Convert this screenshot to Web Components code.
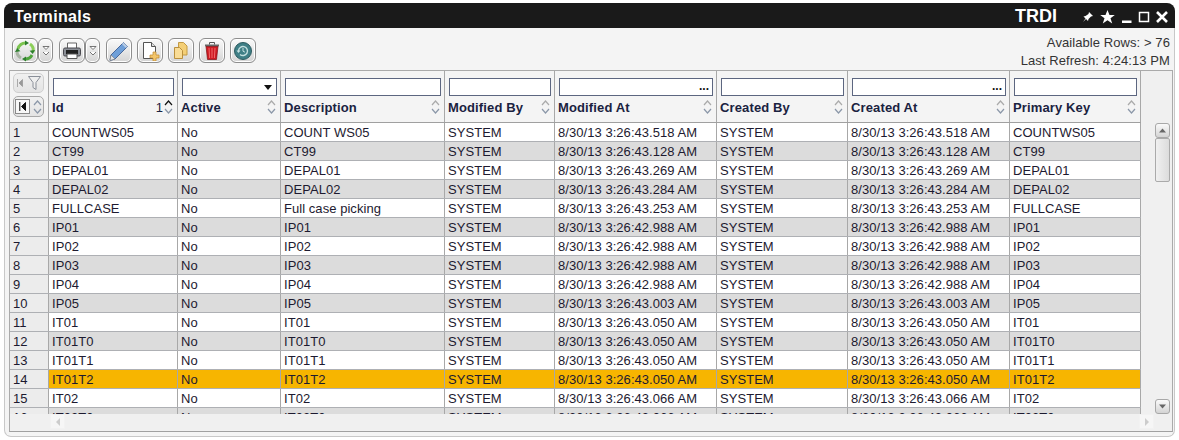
<!DOCTYPE html>
<html><head><meta charset="utf-8"><style>
html,body{margin:0;padding:0;background:#fff;height:440px;overflow:hidden}
body{font:13px "Liberation Sans",Arial,sans-serif;--cols:39px 129px 103px 164px 110px 162px 131px 162px 131px}
</style></head><body>
<x-window title="Terminals" brand="TRDI">
  <x-toolbar slot="toolbar"></x-toolbar>
  <x-grid></x-grid>
</x-window>
<script>
const ICONS={
refresh:`<svg width="22" height="22" viewBox="0 0 22 22"><g fill="none" stroke-width="3"><path d="M4 9a7.500 7.500 0 0 1 8-6" stroke="#7cc450"/><path d="M16 4a7.500 7.500 0 0 1 3 8" stroke="#8ccf58"/><path d="M18 15a7.500 7.500 0 0 1-7 4" stroke="#4fa53c"/><path d="M7 18a7.500 7.500 0 0 1-4-7" stroke="#a9b4a5"/></g><path d="M11 .5L15 3l-4 2.500zM21 10l-2.200 4-3.200-3.300zM12 21.500L8 19l4-2.500zM1 12l2.200-4 3.200 3.300z" fill="#2d7f2d"/></svg>`,
print:`<svg width="20" height="20" viewBox="0 0 20 20"><path d="M5.500 2h9v6h-9z" fill="#fff" stroke="#666"/><rect x="1.500" y="7" width="17" height="8" rx="1.500" fill="#8b8f96" stroke="#4a4a50"/><rect x="4" y="9" width="12" height="4" fill="#222"/><path d="M5 13h10v4.500H5z" fill="#fff" stroke="#555"/></svg>`,
edit:`<svg width="22" height="22" viewBox="0 0 22 22"><path d="M3 15L15.500 2.500l4 4L7 19l-5 1.500z" fill="#6f9fd8" stroke="#47679a"/><path d="M15.500 2.500l4 4-1.600 1.600-4-4z" fill="#b9cde6"/><path d="M3 15l4 4-5 1.500z" fill="#e6e6e6" stroke="#777" stroke-width=".6"/></svg>`,
add:`<svg width="20" height="20" viewBox="0 0 20 20"><path d="M3.500 1.500h8l4 4v12h-12z" fill="#fff" stroke="#555"/><path d="M11.500 1.500v4h4" fill="#ddd" stroke="#555"/><path d="M13 11h3v3h3v3h-3v3h-3v-3h-3v-3h3z" fill="#f2c56c" stroke="#c28a2e" stroke-width=".7"/></svg>`,
copy:`<svg width="20" height="20" viewBox="0 0 20 20"><path d="M7.500 1.500h5l3.500 3.500v9H7.500z" fill="#f4cf76" stroke="#c29a45"/><path d="M3.500 6.500h5l3 3v8h-8z" fill="#f9dc95" stroke="#b98f3d"/></svg>`,
del:`<svg width="18" height="20" viewBox="0 0 18 20"><path d="M2 3.500h14v2H2z" fill="#666"/><path d="M6.500 3.500V1.500h5v2" fill="none" stroke="#555"/><path d="M3 5.500h12l-1.500 13h-9z" fill="#cf1a22" stroke="#7d1014" stroke-width=".7"/><path d="M6 7l.6 10M9 7v10M12 7l-.6 10" stroke="#f06a6a"/></svg>`,
hist:`<svg width="20" height="20" viewBox="0 0 20 20"><circle cx="10" cy="10" r="8.500" fill="#3f7f86" stroke="#2d5b60"/><path d="M5.500 10a4.500 4.500 0 1 1 1.500 3.400" fill="none" stroke="#c5e0e0" stroke-width="1.400"/><path d="M3.500 9.500h4l-2 2.500z" fill="#c5e0e0"/><path d="M10 7v3.200l2 1" fill="none" stroke="#c5e0e0"/></svg>`
};

class XWindow extends HTMLElement{constructor(){super();const s=this.attachShadow({mode:'open'});
s.innerHTML=`<style>
:host{display:block;margin:3px 4px 0 4px;width:1171px;height:434px;box-sizing:border-box;background:#f4f4f4;border:1px solid #c8c8c8;border-top:0;border-radius:9px 9px 7px 7px;position:relative}
.bar{height:25px;box-sizing:border-box;padding:2px 7px 0 10px;margin:0 -1px;background:#1a1a1a;border-radius:8px 8px 0 0;color:#fff;display:flex;align-items:center;font-weight:bold;font-size:16px}
.t{flex:1;letter-spacing:.3px}.brand{margin-right:25px;font-size:18px}
.ic{display:flex;gap:6px;align-items:center}
.tb{padding:0 2px 0 4px}
</style>
<div class="bar"><span class="t">${this.getAttribute('title')}</span><span class="brand">${this.getAttribute('brand')}</span>
<span class="ic">
<svg width="12" height="14" viewBox="0 0 12 14"><path d="M7 2l4 4-2 .5-2.500 2.500-.5 2-2-2-3 3 2.500-3.500-2-2 2-.5L6.500 4z" fill="#fff"/></svg>
<svg width="15" height="14" viewBox="0 0 15 14"><path d="M7.500 0l2 5h5.300l-4.300 3.200 1.700 5.300-4.700-3.300-4.700 3.300 1.700-5.300L.2 5h5.300z" fill="#fff"/></svg>
<svg width="11" height="14" viewBox="0 0 11 14"><path d="M1 10.500h9.500v2.500H1z" fill="#fff"/></svg>
<svg width="12" height="14" viewBox="0 0 12 14"><path d="M1.500 2.500h9v9h-9z" fill="none" stroke="#fff" stroke-width="1.500"/></svg>
<svg width="12" height="14" viewBox="0 0 12 14"><path d="M1 2l10 10M11 2L1 12" stroke="#fff" stroke-width="2.600"/></svg>
</span></div>
<div class="tb"><slot name="toolbar"></slot></div>
<div class="g"><slot></slot></div>`;}}

class XBtn extends HTMLElement{constructor(){super();const s=this.attachShadow({mode:'open'});
const w=this.getAttribute('w')||26;const ic=this.getAttribute('icon');
s.innerHTML=`<style>:host{display:flex;align-items:center;justify-content:center;box-sizing:border-box;width:${w}px;height:25px;border:1px solid #8e8e8e;border-radius:6px;background:linear-gradient(#fafafa,#e6e6e6 55%,#d4d4d4);box-shadow:inset 0 0 0 1px #fff}</style>
${ic==='more'?`<svg width="8" height="12" viewBox="0 0 8 12"><path d="M1 1.500l3 3 3-3zM1 7l3 3 3-3" fill="#fff" stroke="#555" stroke-width=".8"/></svg>`:ICONS[ic]}`;}}

class XToolbar extends HTMLElement{constructor(){super();const s=this.attachShadow({mode:'open'});
s.innerHTML=`<style>:host{display:flex;height:42px;padding-top:10px;box-sizing:border-box;align-items:flex-start}
.l{display:flex;flex:1;margin-left:3px}.gap{width:5px}.g6{width:6px}
.r{text-align:right;letter-spacing:.08px;color:#333;line-height:18px;margin-top:-4px;padding-right:2px}
</style>
<div class="l"><x-btn icon="refresh"></x-btn><x-btn icon="more" w="15"></x-btn><div class="g6"></div>
<x-btn icon="print" w="26"></x-btn><x-btn icon="more" w="15"></x-btn><div class="g6"></div>
<x-btn icon="edit"></x-btn><div class="gap"></div><x-btn icon="add"></x-btn><div class="gap"></div><x-btn icon="copy"></x-btn><div class="gap"></div><x-btn icon="del"></x-btn><div class="gap"></div><x-btn icon="hist"></x-btn></div>
<div class="r"><div>Available Rows: &gt; 76</div><div>Last Refresh: 4:24:13 PM</div></div>`;}}

class XHead extends HTMLElement{constructor(){super();const s=this.attachShadow({mode:'open'});
const k=this.getAttribute('kind')||'';const active=this.hasAttribute('sorted');
s.innerHTML=`<style>:host{display:block;box-sizing:border-box;border-right:1px solid #a8a8a8;padding:7px 3px 0 4px;position:relative;min-width:0}
.f{box-sizing:border-box;height:18px;background:#fff;border:1px solid #5c6680;position:relative}
.k{position:absolute;right:3px;top:0;font-weight:bold;font-size:12px;line-height:14px;color:#111;letter-spacing:0}
.tri{position:absolute;right:4px;top:6px;border:4.500px solid transparent;border-top:5px solid #111;border-bottom:0}
.row{display:flex;align-items:center;height:23px;font-weight:bold;letter-spacing:.13px;color:#1a2240;white-space:nowrap}
.lab{flex:1;margin-left:-1px}.n{font-weight:normal;margin-right:1px;letter-spacing:0}
svg{display:block;flex:none;margin-right:1px;margin-top:-1px}
</style>
<div class="f">${k==='dots'?'<span class="k">...</span>':k==='drop'?'<span class="tri"></span>':''}</div>
<div class="row"><span class="lab"><slot></slot></span>${active?'<span class="n">1</span>':''}
<svg width="9" height="16" viewBox="0 0 9 16"><path d="M1 6l3.500-4L8 6" fill="none" stroke="${active?'#111':'#aaa'}" stroke-width="1.200"/><path d="M1 10l3.500 4L8 10" fill="none" stroke="#8b97a8" stroke-width="1.200"/></svg></div>`;}}

class XCorner extends HTMLElement{constructor(){super();const s=this.attachShadow({mode:'open'});
s.innerHTML=`<style>:host{display:flex;flex-direction:column;gap:3px;box-sizing:border-box;border-right:1px solid #a8a8a8;padding:2px 4px 0 3px}
.b{height:20px;box-sizing:border-box;border:1px solid #cfcfcf;border-radius:5px;background:linear-gradient(#f0f0f0,#e4e4e4);display:flex;align-items:center;justify-content:center;gap:5px}
.b2{border-color:#a8a8a8;height:21px;gap:3px}
.in{width:15px;height:15px;box-sizing:border-box;border:1px solid #8a8a8a;background:#f7f7f7;display:flex;align-items:center;justify-content:center}
</style>
<div class="b"><svg width="6" height="8" viewBox="0 0 6 8"><path d="M.5 0v8M5.500 .5v7L2 4z" fill="#999" stroke="#999" stroke-width=".8"/></svg><svg width="13" height="14" viewBox="0 0 13 14"><path d="M.5 .5h12L8 6.500v7l-3-2v-5z" fill="#eee" stroke="#8a8f98"/></svg></div>
<div class="b b2"><span class="in"><svg width="7" height="9" viewBox="0 0 7 9"><path d="M.8 0v9M6.500 .5v8L2.500 4.500z" fill="#111" stroke="#111"/></svg></span><svg width="9" height="18" viewBox="0 0 9 18"><path d="M1 7l3.500-4L8 7M1 11l3.500 4L8 11" fill="none" stroke="#8b97a8" stroke-width="1.200"/></svg></div>`;}}

class XRow extends HTMLElement{constructor(){super();const s=this.attachShadow({mode:'open'});
const c=JSON.parse(this.getAttribute('cells'));const n=+this.getAttribute('n');const sel=this.hasAttribute('selected');
const bg=sel?'#f7b500':(n%2?'#fff':'#dcdcdc');
s.innerHTML=`<style>:host{display:grid;grid-template-columns:var(--cols);height:19px;box-sizing:border-box;border-bottom:1px solid #aeb0b4;background:${bg};color:#1d1a30;letter-spacing:.05px;line-height:19px;white-space:nowrap}
span{display:block;overflow:hidden;border-right:1px solid #a8a8a8;padding-left:3px}
.h{background:#ececec;padding-left:3px;letter-spacing:0}
</style><span class="h">${n}</span>${c.map(t=>`<span>${t}</span>`).join('')}`;}}

class XVScroll extends HTMLElement{constructor(){super();const s=this.attachShadow({mode:'open'});
const btn=d=>`<div class="btn"><svg width="7" height="5" viewBox="0 0 7 5"><path d="${d}" fill="#666"/></svg></div>`;
s.innerHTML=`<style>:host{display:flex;flex-direction:column;box-sizing:border-box;width:15px;height:291px;margin-left:14px;padding-top:0}
.btn{height:15px;box-sizing:border-box;border:1px solid #a8a8a8;border-radius:3px;background:linear-gradient(#fafafa,#d4d4d4);display:flex;align-items:center;justify-content:center;flex:none}
.th{height:44px;box-sizing:border-box;border:1px solid #aaa;border-radius:2px;background:linear-gradient(90deg,#f0f0f0,#dcdcdc);flex:none}
.sp{flex:1}</style>${btn('M3.500 .5L7 4.500H0z')}<div class="th"></div><div class="sp"></div>${btn('M3.500 4.500L7 .5H0z')}`;}}

class XHScroll extends HTMLElement{constructor(){super();const s=this.attachShadow({mode:'open'});
const btn=d=>`<div class="btn"><svg width="6" height="8" viewBox="0 0 6 8"><path d="${d}" fill="#ccc"/></svg></div>`;
s.innerHTML=`<style>:host{display:flex;box-sizing:border-box;height:17px;background:#f0f0f0;padding-left:40px;padding-right:18px;}
.btn{width:15px;height:15px;background:#f6f6f6;border:1px solid #f2f2f2;box-sizing:border-box;display:flex;align-items:center;justify-content:center}
.sp{flex:1}</style>${btn('M5 0v8L1 4z')}<div class="sp"></div>${btn('M1 0v8l4-4z')}`;}}

class XGrid extends HTMLElement{constructor(){super();const s=this.attachShadow({mode:'open'});
const t={1:'43.518',2:'43.128',3:'43.269',4:'43.284',5:'43.253',6:'42.988',7:'42.988',8:'42.988',9:'42.988',10:'43.003',11:'43.050',12:'43.050',13:'43.050',14:'43.050',15:'43.066',16:'43.066'};
const ids=['COUNTWS05','CT99','DEPAL01','DEPAL02','FULLCASE','IP01','IP02','IP03','IP04','IP05','IT01','IT01T0','IT01T1','IT01T2','IT02','IT02T0'];
const rows=ids.map((id,i)=>{const d=id==='COUNTWS05'?'COUNT WS05':id==='FULLCASE'?'Full case picking':id;const ts=`8/30/13 3:26:${t[i+1]} AM`;
const cells=[id,'No',d,'SYSTEM',ts,'SYSTEM',ts,id];
return `<x-row n="${i+1}" ${i===13?'selected':''} cells='${JSON.stringify(cells)}'></x-row>`;}).join('');
s.innerHTML=`<style>:host{display:block;box-sizing:border-box;margin-left:4px;width:1164px;height:362px;border:1px solid #aaa;border-bottom-color:#a0a0a0;background:#f0f0f0;overflow:hidden}
.top{display:flex;height:343px}
.main{width:1131px;flex:none}
.hd{display:grid;grid-template-columns:var(--cols);height:52px;background:#f4f4f4;border-bottom:1px solid #a0a0a0;box-sizing:border-box}
.body{height:291px;overflow:hidden}
.side{padding-top:52px;height:291px}
</style>
<div class="top"><div class="main"><div class="hd">
<x-corner></x-corner>
<x-head sorted>Id</x-head><x-head kind="drop">Active</x-head><x-head>Description</x-head><x-head>Modified By</x-head><x-head kind="dots">Modified At</x-head><x-head>Created By</x-head><x-head kind="dots">Created At</x-head><x-head>Primary Key</x-head>
</div><div class="body">${rows}</div></div>
<div class="side"><x-vscroll></x-vscroll></div></div>
<x-hscroll></x-hscroll>`;}}

customElements.define('x-btn',XBtn);
customElements.define('x-toolbar',XToolbar);
customElements.define('x-head',XHead);
customElements.define('x-corner',XCorner);
customElements.define('x-row',XRow);
customElements.define('x-vscroll',XVScroll);
customElements.define('x-hscroll',XHScroll);
customElements.define('x-grid',XGrid);
customElements.define('x-window',XWindow);
</script>
</body></html>
